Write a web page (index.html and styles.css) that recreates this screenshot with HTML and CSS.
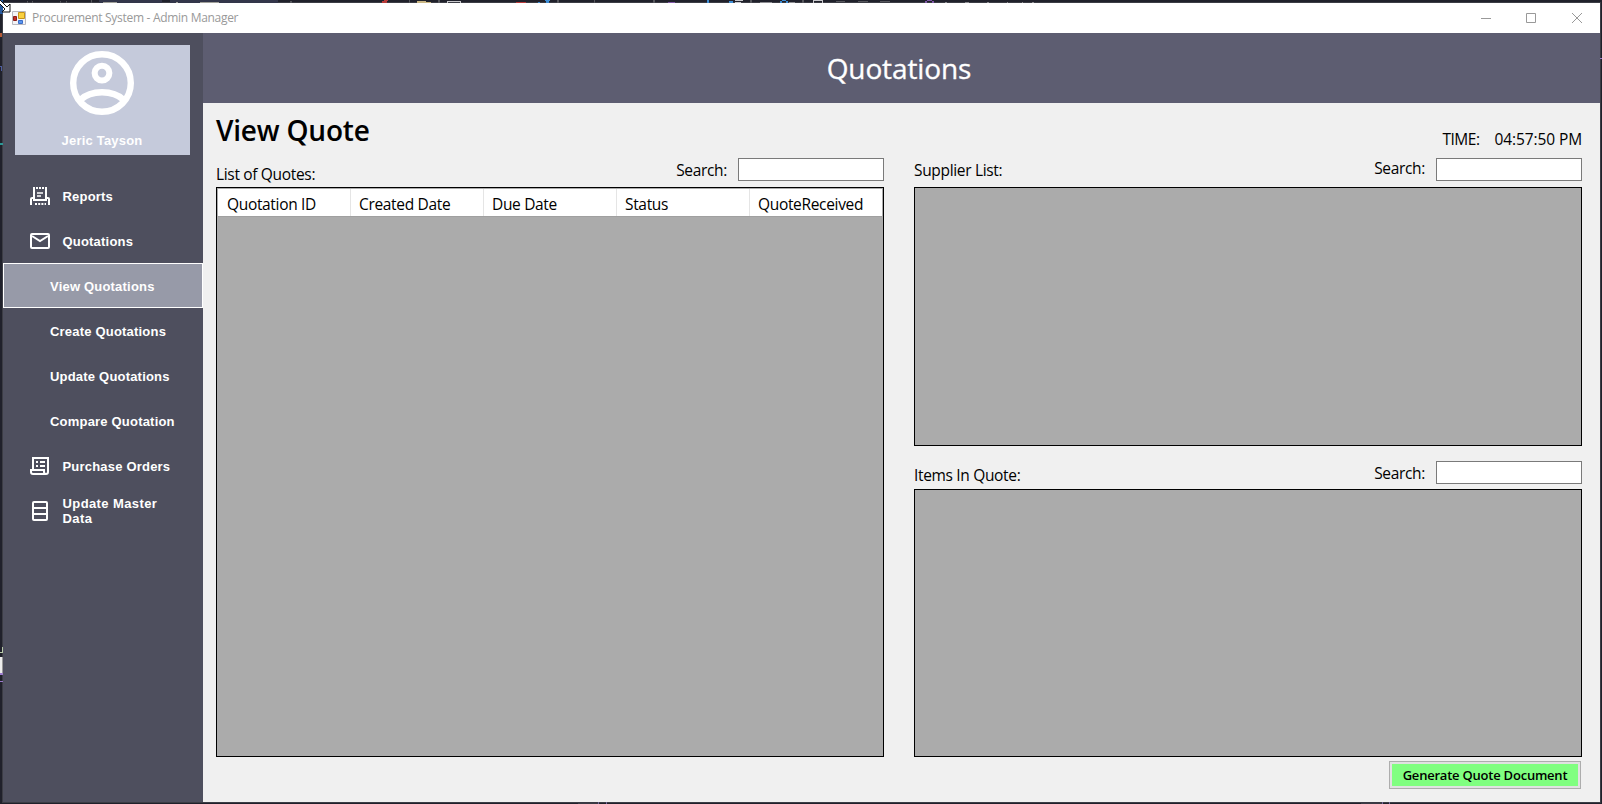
FILE: index.html
```html
<!DOCTYPE html>
<html lang="en">
<head>
<meta charset="utf-8">
<title>Procurement System - Admin Manager</title>
<link rel="stylesheet" href="styles.css">
</head>
<body>
<svg class="backdrop" width="1602" height="804" viewBox="0 0 1602 804" shape-rendering="crispEdges">
  <path d="M99 0h63v3H99zM170 0h108v3H170z" fill="#33364a"/>
  <path d="M103 2h14v1h-14zM176 2h2v1h-2zM200 2h19v1h-19z" fill="#a0a09a"/>
  <path d="M27 1h1v2h-1zM32 1h1v2h-1zM60 1h1v2h-1zM66 1h1v2h-1zM91 0h1v3h-1zM290 1h2v2h-2zM409 0h1v3h-1zM438 0h2v3h-2zM557 0h2v3h-2zM594 0h1v3h-1zM653 0h2v3h-2zM750 0h2v3h-2zM802 0h2v3h-2zM836 1h9v1h-9zM858 1h10v1h-10zM880 1h10v1h-10z" fill="#55565c"/>
  <path d="M384 0h4v1h-4zM382 1h5v2h-5zM516 2h10v1h-10z" fill="#b83a3a"/>
  <path d="M417 1h9v1h-9zM417 2h14v1h-14z" fill="#c9b683"/>
  <path d="M447 1h14v1h-14zM447 2h1v1h-1zM460 2h1v1h-1zM735 0h8v1h-8zM735 2h6v1h-6zM813 0h10v1h-10zM813 1h1v2h-1zM822 1h1v2h-1z" fill="#c8c8cc"/>
  <path d="M545 0h5v1h-5zM546 1h3v2h-3zM538 2h2v1h-2zM707 0h2v3h-2zM729 1h4v2h-4zM780 1h2v2h-2zM782 0h4v1h-4zM786 1h2v2h-2z" fill="#3f8fd6"/>
  <path d="M668 2h7v1h-7zM925 1h2v2h-2zM927 0h5v1h-5zM932 1h2v2h-2z" fill="#8058a8"/>
  <path d="M760 2h12v1h-12zM789 2h6v1h-6zM945 2h2v1h-2zM965 2h4v1h-4zM987 2h2v1h-2zM1007 2h1v1h-1zM1022 2h1v1h-1zM1032 2h2v1h-2z" fill="#8d8d92"/>
  <path d="M0 0h3v14H0z" fill="#285a9c"/>
  <path d="M0 33h2v4H0z" fill="#b35a38"/>
  <path d="M0 66h2v1H0zM1 67h1v4H1z" fill="#4e5da0"/>
  <path d="M0 143h3v2H0z" fill="#2d9795"/>
  <path d="M0 652h3v1H0zM2 647h1v5H2z" fill="#b7c8a8"/>
  <path d="M0 657h2v16H0z" fill="#ededed"/>
  <path d="M2 657h1v16H2z" fill="#999"/>
  <path d="M0 673h3v2H0zM0 681h3v1H0zM1600 58h2v1h-2z" fill="#9b7acb"/>
  <path d="M1361 802h21v2h-21zM578 802h20v2h-20z" fill="#3a3a44"/>
  <path d="M1382 802h1v2h-1zM1389 802h1v2h-1zM598 802h1v2h-1zM606 802h1v2h-1z" fill="#77699c"/>
</svg>
<div class="window">
  <header class="titlebar">
    <svg class="app-icon" width="14" height="14" viewBox="0 0 14 14">
      <path d="M.5.5h13v13H.5z" fill="#f3f3f6" stroke="#b9b9c0"/>
      <path d="M6.500 1.500h6v6h-6z" fill="#f9d03f" stroke="#c4921c"/>
      <path d="M1.500 5.500h3v4h-3z" fill="#c22e26" stroke="#8d1d18"/>
      <path d="M6.500 9.500h4v3h-4z" fill="#5a96ee" stroke="#3a6cc8"/>
    </svg>
    <span class="title"><span class="t t-title">Procurement System - Admin Manager</span></span>
    <svg class="controls" width="102" height="12" viewBox="0 0 102 12" fill="none" stroke="#999">
      <path d="M0 6.500h10M45.500 1.500h9v9h-9zM91 1l10 10M101 1L91 11"/>
    </svg>
  </header>
  <div class="body">
    <nav class="sidebar">
      <div class="profile">
        <svg width="64" height="64" viewBox="2 2 20 20" fill="none" stroke="#fff" stroke-width="2"><circle cx="12" cy="12" r="9"/><circle cx="12" cy="8.900" r="2.300" stroke-width="1.900"/><path d="M5.200 17.300C8.600 14.100 15.400 14.100 18.800 17.300"/></svg>
        <span class="t name">Jeric Tayson</span>
      </div>
      <a class="item"><svg width="20" height="18" viewBox="0 0 20 18" fill="none" stroke="#fff" stroke-width="2"><path d="M1 18v-6q0-1 1-1h2V1.500M16 1.500V11h2q1 0 1 1v6M3 13h14"/><path d="M3 1h14" stroke-dasharray="2 1"/><path d="M7 6h6M7 9h4" stroke-width="1.600"/><path d="M5 17h11" stroke-dasharray="2 1.200"/></svg><span class="t reports">Reports</span></a>
      <a class="item"><svg width="20" height="16" viewBox="0 0 20 16" fill="none" stroke="#fff" stroke-width="2"><rect x="1" y="1" width="18" height="14" rx="1"/><path d="M2 3l8 5 8-5"/></svg><span class="t quot">Quotations</span></a>
      <a class="item sub active"><span class="t vq">View Quotations</span></a>
      <a class="item sub"><span class="t cq">Create Quotations</span></a>
      <a class="item sub"><span class="t uq">Update Quotations</span></a>
      <a class="item sub"><span class="t pq">Compare Quotation</span></a>
      <a class="item"><svg width="20" height="18" viewBox="0 0 20 18" fill="none" stroke="#fff" stroke-width="2"><path d="M3 12V1h15v14q0 2-2 2H3q-2 0-2-2v-2h13v2q0 2 2 2"/><path d="M6 5h2M10 5h5M6 9h2M10 9h5"/></svg><span class="t po">Purchase Orders</span></a>
      <a class="item"><svg width="20" height="20" viewBox="0 0 20 20" fill="none" stroke="#fff" stroke-width="2"><rect x="3" y="1" width="14" height="18" rx="1"/><path d="M3 7h14M3 13h14"/></svg><span class="two"><span class="t um">Update Master</span><span class="t da">Data</span></span></a>
    </nav>
    <main class="main">
      <div class="banner"><span class="t banner-text">Quotations</span></div>
      <div class="content">
        <section class="left">
          <h1><span class="t h">View Quote</span></h1>
          <div class="bar"><span class="t lq">List of Quotes:</span><span class="grow"></span><span class="t search">Search:</span><input class="box"></div>
          <div class="grid table">
            <div class="row"><span><b class="t">Quotation ID</b></span><span><b class="t">Created Date</b></span><span><b class="t">Due Date</b></span><span><b class="t">Status</b></span><span><b class="t">QuoteReceived</b></span></div>
          </div>
        </section>
        <section class="right">
          <div class="time"><span class="t tl">TIME:</span><span class="t tv">04:57:50 PM</span></div>
          <div class="bar"><span class="t sl">Supplier List:</span><span class="grow"></span><span class="t search up">Search:</span><input class="box"></div>
          <div class="grid supplier"></div>
          <div class="bar second"><span class="t iq">Items In Quote:</span><span class="grow"></span><span class="t search">Search:</span><input class="box"></div>
          <div class="grid items"></div>
          <button class="generate"><span class="t gd">Generate Quote Document</span></button>
        </section>
      </div>
    </main>
  </div>
</div>
<svg class="cursor" width="12" height="13" viewBox="0 0 12 13"><path d="M0 0l7 7 3-3v8H2l3-3-6-6" fill="#fff" stroke="#111"/></svg>
</body>
</html>
```
FILE: styles.css
```css
* { box-sizing: border-box; }
body { margin: 0; width: 1602px; height: 804px; overflow: hidden; background: #20212b; padding: 3px 2px 2px 3px; font-family: "Open Sans", "Noto Sans", sans-serif; color: #000; }
.backdrop { position: absolute; left: 0; top: 0; z-index: 1; }
.cursor { position: absolute; left: 0; top: 0; z-index: 2; }
.window { position: relative; width: 1597px; height: 799px; background: #f0f0f0; box-shadow: 0 0 0 1px #3c3d45; }
.titlebar { height: 30px; background: #fff; display: flex; align-items: center; padding: 0 17px 0 9px; }
.title { flex: 1; padding: 0 0 2px 6px; display: flex; }
.body { display: flex; height: 769px; }
.t { white-space: nowrap; display: inline-block; font-weight: 400; }
.sidebar { width: 200px; background: #4e4f5e; color: #fff; padding-top: 12px; font-family: "Liberation Sans", Arial, sans-serif; font-size: 13px; letter-spacing: 0.2px; }
.sidebar .t { font-weight: 700; line-height: 15px; }
.profile { width: 175px; height: 110px; margin: 0 0 18px 12px; background: #c5cadb; display: flex; flex-direction: column; align-items: center; padding-top: 6px; }
.profile .name { margin-top: 18px; margin-left: -1px; }
.profile svg { margin-left: -1px; }
.item { height: 45px; display: flex; align-items: center; padding-left: 27px; gap: 12.500px; }
.item > .t { padding-top: 2px; }
.item.sub { padding-left: 47px; }
.item.active { background: #979aa8; border: 1px solid #fff; padding-left: 46px; }
.two { display: flex; flex-direction: column; align-items: flex-start; letter-spacing: 0.4px; }
.main { flex: 1; }
.banner { height: 70px; background: #5d5d71; color: #fff; display: flex; align-items: center; justify-content: center; padding-right: 5px; }
.content { display: flex; gap: 30px; padding-left: 13px; height: 699px; }
.left, .right { width: 668px; }
h1 { margin: 0; height: 55px; font-size: 28px; line-height: 55px; letter-spacing: -0.2px; }
.h { font-weight: 600; }
.bar { height: 23px; display: flex; align-items: center; font-size: 15.500px; line-height: 23px; letter-spacing: -0.33px; }
.grow { flex: 1; }
.box { width: 146px; height: 23px; border: 1px solid #7a7a7a; background: #fff; margin: 0 0 0 11px; padding: 0; }
.grid { border: 1px solid #000; background: #ababab; }
.bar + .grid { margin-top: 6px; }
.table { height: 570px; }
.row { height: 28px; margin: 1px 1px 0; background: #fff; border-bottom: 1px solid #a0a0a0; display: flex; font-size: 15.500px; line-height: 30px; letter-spacing: -0.33px; }
.row span { width: 133px; border-right: 1px solid #e5e5e5; padding-left: 8px; }
.row span:first-child { padding-left: 9px; }
.row span:last-child { border: 0; width: 132px; }
.time { height: 55px; display: flex; justify-content: flex-end; gap: 15px; font-size: 15.500px; line-height: 23px; padding-top: 25px; letter-spacing: -0.1px; }
.tl { letter-spacing: -0.5px; }
.supplier { height: 259px; }
.second { margin-top: 15px; }
.bar.second + .grid { margin-top: 5px; }
.items { height: 268px; }
.bar .t { padding-top: 1px; }
.bar .lq { padding-top: 10px; }
.bar .iq { padding-top: 5px; }
.bar .up { padding: 0 0 3px; }
.generate { display: flex; align-items: center; justify-content: center; width: 192px; height: 28px; margin: 4px 1px 0 auto; padding: 0; border: 1px solid #adadad; background: #80ff80; box-shadow: inset 0 0 0 2px #e1e1e1; font: 600 13px "Open Sans", sans-serif; letter-spacing: -0.22px; color: #000; }
.gd { font-weight: 600; }
.t-title { font-size: 12px; color: #999; letter-spacing: -0.3px; }
.banner-text { font-size: 28px; line-height: 40px; letter-spacing: -0.1px; -webkit-text-stroke: 0.3px #fff; }
```
